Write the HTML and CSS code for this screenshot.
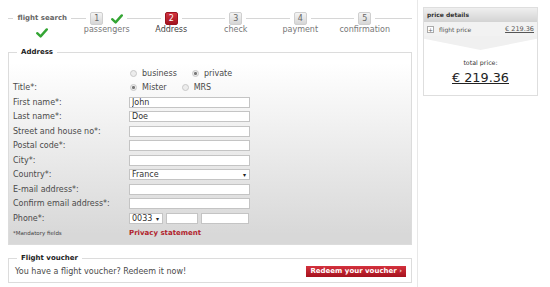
FILE: index.html
```html
<!DOCTYPE html>
<html lang="en">
  <head>
    <meta charset="UTF-8" />
    <title>Booking - Address</title>
    <link rel="stylesheet" href="styles.css">
  </head>
  <body>
    <div class="page">
      <div class="main">
        <ol class="steps">
          <li class="step done">
            <span class="mark"><span class="first">flight search</span></span>
            <svg class="check" viewBox="0 0 12 10"><path d="M1.2 5.2 L4.6 8.4 L10.8 1.4" /></svg>
          </li>
          <li class="step">
            <span class="mark"><span class="num">1</span><svg class="check" viewBox="0 0 12 10"><path d="M1.2 5.2 L4.6 8.4 L10.8 1.4" /></svg></span>
            <span class="label">passengers</span>
          </li>
          <li class="step current">
            <span class="mark"><span class="num">2</span></span>
            <span class="label">Address</span>
          </li>
          <li class="step">
            <span class="mark"><span class="num">3</span></span>
            <span class="label">check</span>
          </li>
          <li class="step">
            <span class="mark"><span class="num">4</span></span>
            <span class="label">payment</span>
          </li>
          <li class="step">
            <span class="mark"><span class="num">5</span></span>
            <span class="label">confirmation</span>
          </li>
        </ol>

        <fieldset class="box address">
          <legend>Address</legend>
          <div class="rows">
            <span></span>
            <div class="radios">
              <label><span class="radio"></span>business</label>
              <label><span class="radio on"></span>private</label>
            </div>

            <span>Title*:</span>
            <div class="radios">
              <label><span class="radio on"></span>Mister</label>
              <label><span class="radio"></span>MRS</label>
            </div>

            <span>First name*:</span>
            <input class="field" type="text" value="John" />

            <span>Last name*:</span>
            <input class="field" type="text" value="Doe" />

            <span>Street and house no*:</span>
            <input class="field" type="text" />

            <span>Postal code*:</span>
            <input class="field" type="text" />

            <span>City*:</span>
            <input class="field" type="text" />

            <span>Country*:</span>
            <div class="field select">France</div>

            <span>E-mail address*:</span>
            <input class="field" type="text" />

            <span>Confirm email address*:</span>
            <input class="field" type="text" />

            <span>Phone*:</span>
            <div class="phone">
              <div class="field select code">0033</div>
              <input class="field area" type="text" />
              <input class="field number" type="text" />
            </div>

            <span class="note">*Mandatory fields</span>
            <a class="privacy" href="#">Privacy statement</a>
          </div>
        </fieldset>

        <fieldset class="box voucher">
          <legend>Flight voucher</legend>
          <div class="voucher-row">
            <span>You have a flight voucher? Redeem it now!</span>
            <button class="redeem">Redeem your voucher <span class="arrow">&#8250;</span></button>
          </div>
        </fieldset>
      </div>

      <aside class="side">
        <div class="price">
          <div class="price-head">price details</div>
          <div class="price-row">
            <span class="plus">+</span>
            <span class="what">flight price</span>
            <a class="amount" href="#">&euro; 219.36</a>
          </div>
          <div class="chevron"></div>
          <div class="total">
            <div class="total-label">total price:</div>
            <a class="total-amount" href="#">&euro; 219.36</a>
          </div>
        </div>
      </aside>
    </div>
  </body>
</html>
```

FILE: styles.css
```css
body {
  margin: 0;
  font-family: 'DejaVu Sans', Verdana, sans-serif;
  font-size: 8px;
  color: #4a4a4a;
  background: #fff;
}

.page {
  display: flex;
  min-height: 287px;
}

.main {
  width: 418px;
  box-sizing: border-box;
  padding: 0 5px 0 8px;
  border-right: 1px solid #e8e8e8;
}

/* progress steps */
.steps {
  list-style: none;
  margin: 0;
  padding: 12px 0 0 2px;
  height: 35px;
  display: flex;
  background: linear-gradient(#d6d6d6, #d6d6d6) 0 18px / 100% 1px no-repeat;
}

.step {
  flex: 0 0 64.5px;
  display: flex;
  flex-direction: column;
  align-items: center;
}

.mark {
  display: flex;
  align-items: center;
  gap: 8px;
  padding: 0 4px;
  background: #fff;
}

.first {
  line-height: 10px;
  margin-top: 1px;
  color: #666;
  font-weight: bold;
  font-size: 7px;
}

.num {
  width: 13px;
  height: 13px;
  box-sizing: border-box;
  border: 1px solid #cfcfcf;
  border-radius: 2px;
  background: linear-gradient(#f4f4f4, #d6d6d6);
  color: #666;
  font-size: 8px;
  line-height: 11px;
  text-align: center;
}

.current .num {
  border-color: #9a1420;
  background: linear-gradient(#d3343f, #a3141f);
  color: #fff;
}

.label {
  line-height: 10px;
  color: #777;
}

.current .label {
  color: #444;
}

.check {
  width: 12px;
  height: 10px;
}

.check path {
  fill: none;
  stroke: #34a534;
  stroke-width: 2.4;
  stroke-linecap: round;
  stroke-linejoin: round;
}

.done .check {
  margin-top: 5px;
}

/* boxes */
.box {
  margin: 0;
  border: 1px solid #dcdcdc;
  padding: 0 4px 4px;
  min-width: 0;
}

.box legend {
  margin-left: 4px;
  padding: 0 4px;
  font-size: 7px;
  font-weight: bold;
  line-height: 10px;
  color: #222;
}

.address {
  background: linear-gradient(#fff 5%, #d8d8d8 95%);
}

.rows {
  margin-top: 9px;
  display: grid;
  grid-template-columns: 116px 1fr;
  grid-auto-rows: 14.5px;
  align-items: center;
}

.radios {
  display: flex;
  gap: 15px;
  padding-left: 1px;
}

.radios label {
  display: flex;
  align-items: center;
  gap: 5px;
}

.radio {
  width: 7px;
  height: 7px;
  box-sizing: border-box;
  border: 1px solid #c8c8c8;
  border-radius: 50%;
  background: #ececec;
}

.radio.on {
  background: radial-gradient(circle, #777 1.2px, #ececec 1.8px);
}

.field {
  width: 121px;
  height: 11px;
  box-sizing: border-box;
  margin: 0;
  padding: 0 2px;
  border: 1px solid #c4c4c4;
  background: #fff;
  font: 8px 'DejaVu Sans', Verdana, sans-serif;
  color: #333;
  line-height: 9px;
}

.select {
  display: flex;
  justify-content: space-between;
}

.select::after {
  content: '\25BE';
  font-size: 6px;
  color: #222;
  padding-right: 1px;
}

.phone {
  display: flex;
  gap: 3px;
}

.phone .code {
  width: 34px;
}

.phone .area {
  width: 32px;
}

.phone .number {
  width: 48px;
}

.note {
  font-size: 5.5px;
  color: #444;
}

.privacy {
  color: #b11f2d;
  font-weight: bold;
  font-size: 7px;
  text-decoration: none;
}

/* voucher */
.voucher {
  margin-top: 8px;
  padding: 0 5px 3px 6px;
}

.voucher legend {
  margin-left: 2px;
}

.voucher-row {
  height: 16px;
  display: flex;
  align-items: center;
  justify-content: space-between;
}

.redeem {
  height: 11px;
  padding: 0 4px;
  border: 0;
  background: linear-gradient(#d4313d, #a5121e);
  color: #fff;
  font: bold 7px 'DejaVu Sans', Verdana, sans-serif;
  line-height: 11px;
}

.redeem .arrow {
  font-weight: normal;
}

/* price panel */
.side {
  padding: 7px 0 0 5px;
}

.price {
  width: 113px;
  border: 1px solid #dedede;
}

.price-head {
  height: 14px;
  line-height: 14px;
  padding: 0 3px;
  background: linear-gradient(#efefef, #d3d3d3);
  font-size: 6px;
  font-weight: bold;
  color: #333;
}

.price-row {
  height: 14px;
  display: flex;
  align-items: center;
  padding: 0 3px;
  background: #f2f2f2;
  font-size: 6px;
}

.plus {
  width: 7px;
  height: 7px;
  box-sizing: border-box;
  border: 1px solid #aaa;
  background: #fff;
  font-size: 6px;
  line-height: 5px;
  text-align: center;
  color: #666;
}

.what {
  margin-left: 5px;
  flex: 1;
  color: #555;
}

.amount {
  color: #555;
  font-size: 6.5px;
}

.chevron {
  height: 14px;
  background: #f0f0f0;
  clip-path: polygon(0 0, 100% 0, 100% 20%, 50% 100%, 0 20%);
}

.total {
  text-align: center;
  padding: 8px 0 10px;
}

.total-label {
  font-size: 6.3px;
  line-height: 10px;
  color: #333;
}

.total-amount {
  display: inline-block;
  margin-top: 3px;
  font-size: 12.8px;
  line-height: 14px;
  color: #222;
}
```
